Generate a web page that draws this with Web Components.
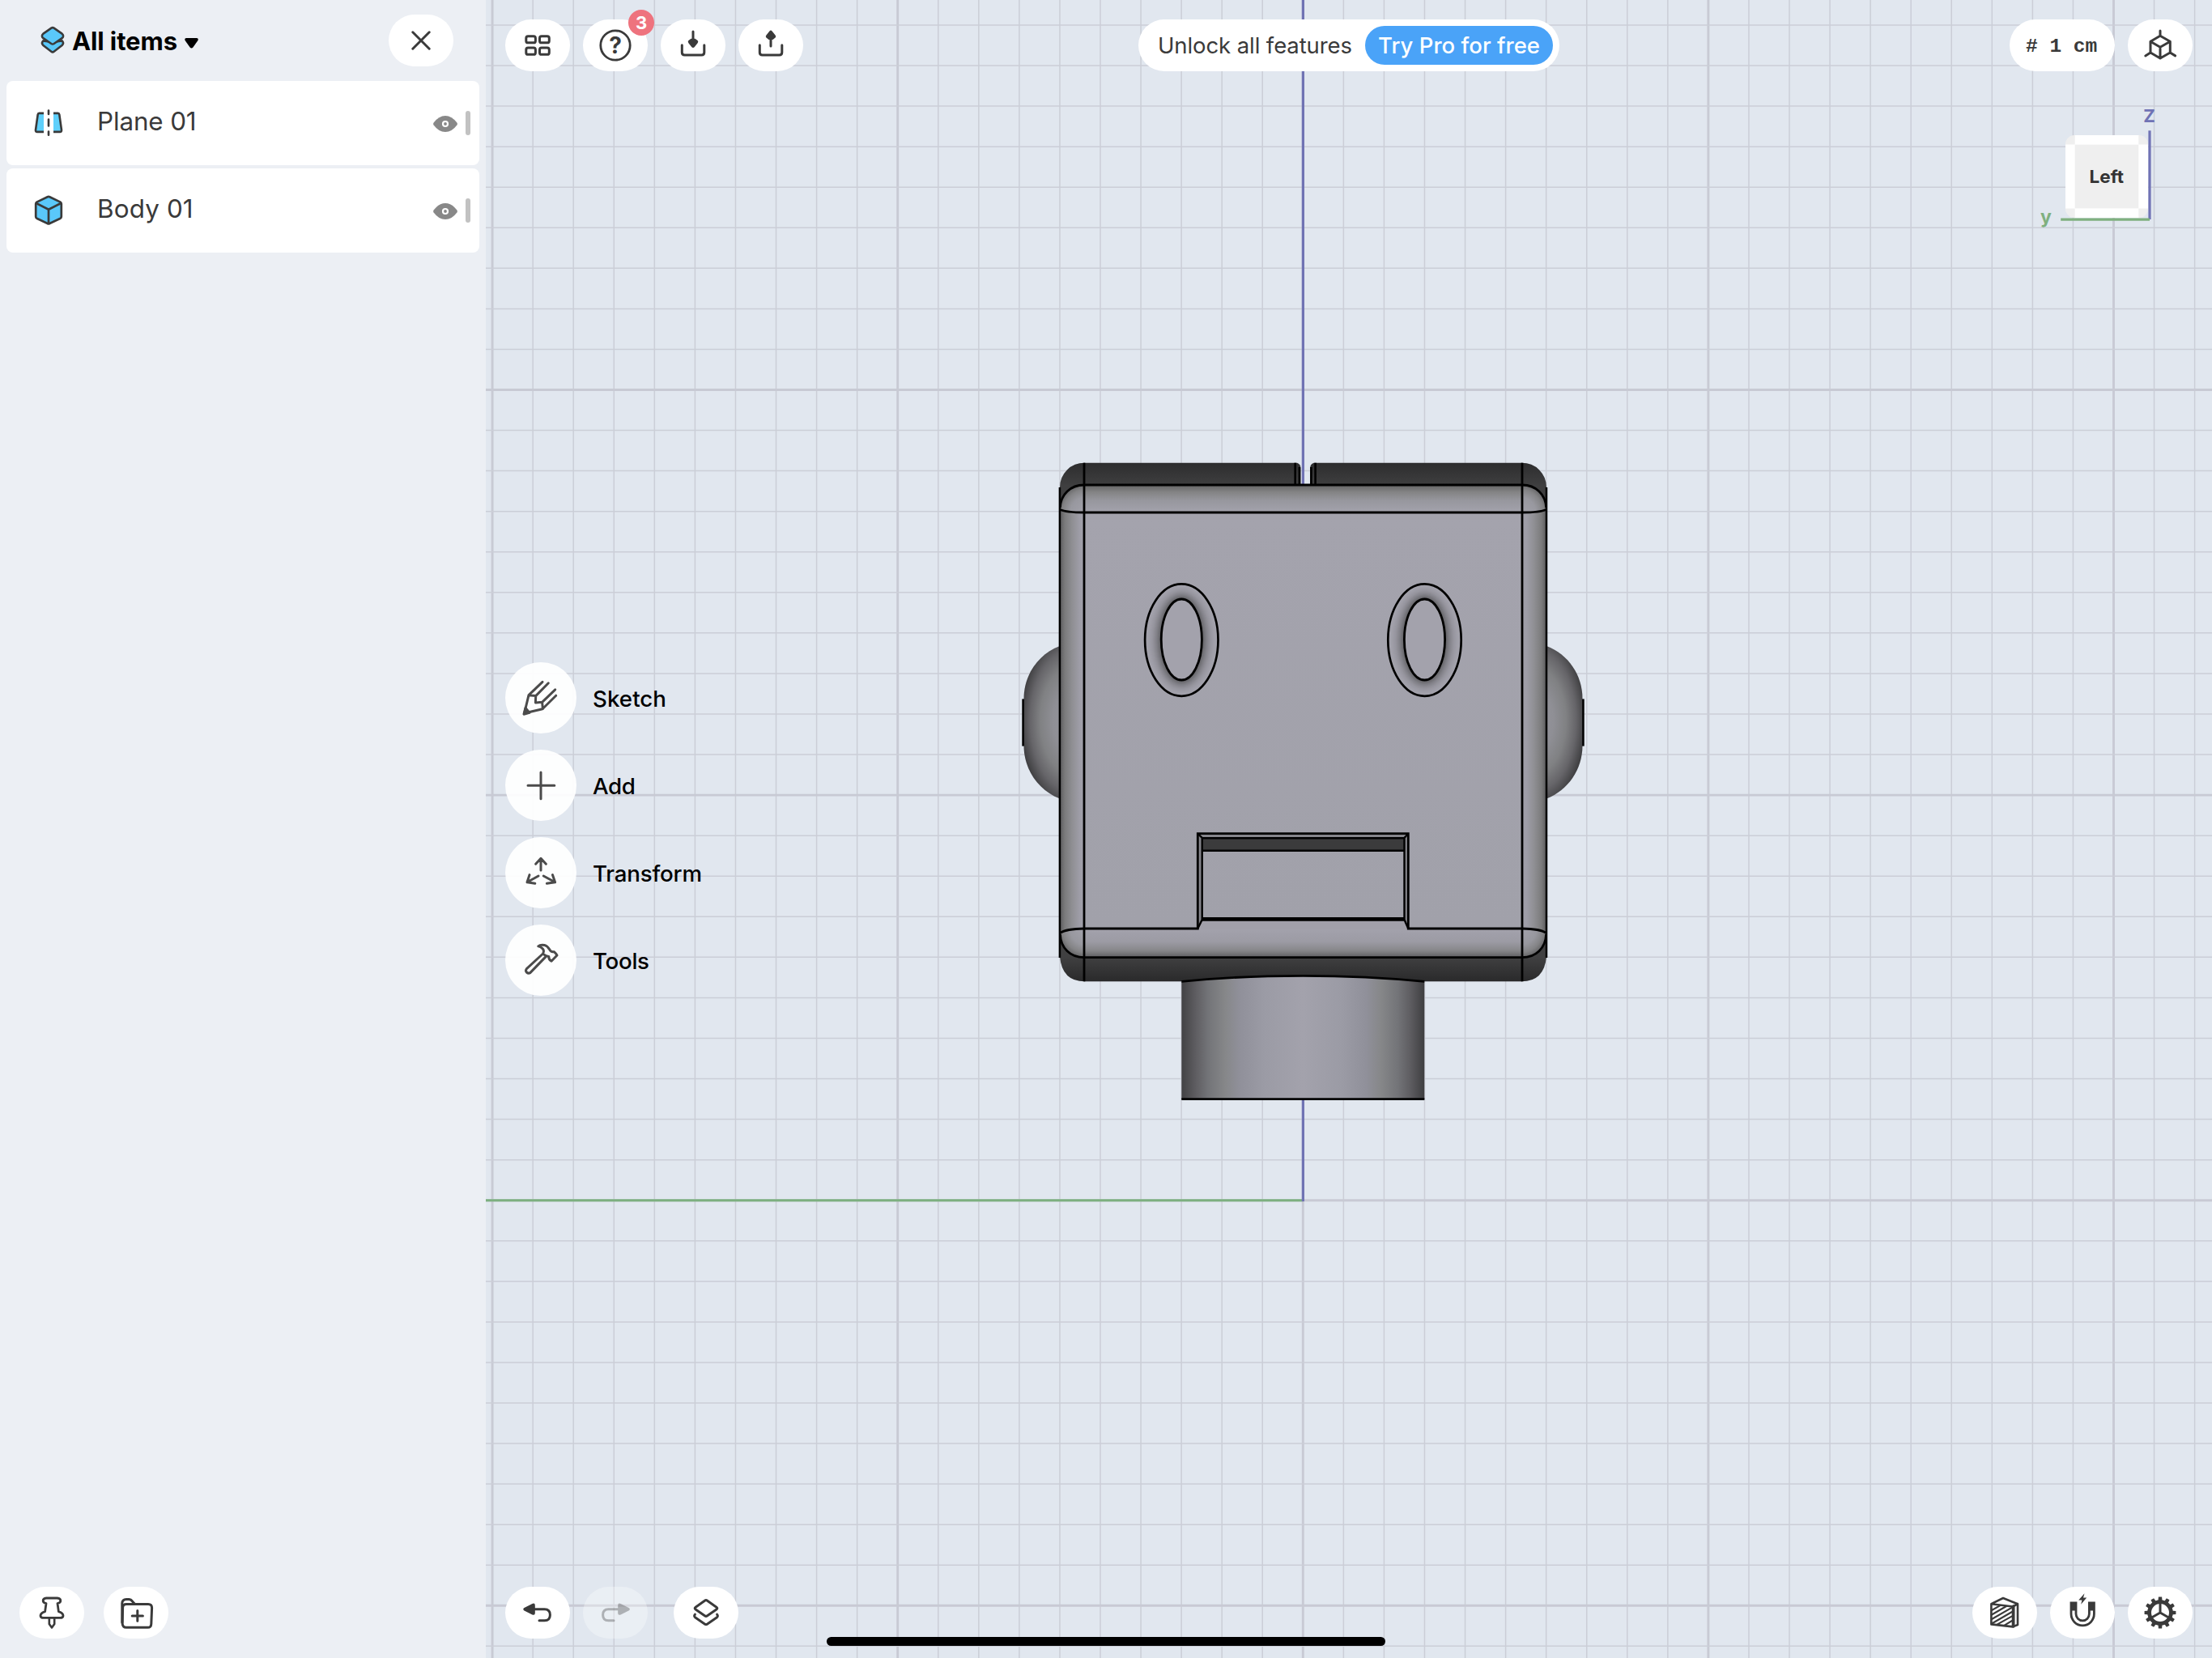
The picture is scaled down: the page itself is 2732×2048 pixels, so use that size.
<!DOCTYPE html>
<html lang="en">
<head>
<meta charset="utf-8">
<title>Modeling workspace</title>
<style>
  html, body { margin: 0; padding: 0; }
  body { width: 2732px; height: 2048px; overflow: hidden; background: #e1e7ef; font-family: Inter, "Liberation Sans", sans-serif; color: #3a3a3a; }
</style>
</head>
<body>
<model-app></model-app>
<script>
const define = (name, html, setup) => {
  const tpl = document.createElement('template');
  tpl.innerHTML = html;
  customElements.define(name, class extends HTMLElement {
    constructor() {
      super();
      this.attachShadow({ mode: 'open' }).appendChild(tpl.content.cloneNode(true));
    }
    connectedCallback() { if (setup) setup(this, this.shadowRoot); }
  });
};

/* Glyphs on an 80x64 button face */
const D = '#3a3a3a';
const gear = () => {
  let t = '';
  for (let i = 0; i < 12; i++) t += `<path d="M37.4 18.5 L37.9 12.6 H42.1 L42.6 18.5Z" fill="${D}" stroke="none" transform="rotate(${i * 30} 40 32)"/>`;
  return `${t}<circle cx="40" cy="32" r="13.4" stroke-width="4.8"/><path d="M40 19V32L28.7 38.5M40 32L51.3 38.5" stroke-width="3"/>`;
};
const undo = `<path d="M23 26.2 L33.4 20.9 Q36.8 19.6 36.8 23 V32.6 Q36.8 35.8 33.4 34.4 L23 29.2 Q21.4 27.7 23 26.2Z" fill="${D}" stroke="none"/><path d="M35 27.7H48.5Q55.4 27.7 55.4 34.7Q55.4 41.7 48.5 41.7H42"/>`;
const ICONS = {
  close: `<path d="M29.8 21.8L50.2 42.2M50.2 21.8L29.8 42.2"/>`,
  grid: `<rect x="25.8" y="20.8" width="11.6" height="8" rx="2.4"/><rect x="42.5" y="20.8" width="11.8" height="8" rx="2.4"/><rect x="25.8" y="34.9" width="11.6" height="8.4" rx="2.4"/><rect x="42.5" y="34.9" width="11.8" height="8.4" rx="2.4"/>`,
  help: `<circle cx="40" cy="32" r="18.2" stroke-width="2.8"/><text x="40" y="42.3" text-anchor="middle" font-size="28" font-weight="700" fill="${D}" stroke="none">?</text>`,
  download: `<path d="M40 15V28"/><path d="M37.5 23.8 H42.5 L45.6 26 Q47 27.6 45.6 29.2 L41.6 34.2 Q40 35.8 38.4 34.2 L34.4 29.2 Q33 27.6 34.4 26Z" fill="${D}" stroke="none"/><path d="M26.3 31.8V40.8Q26.3 44 29.5 44H50.6Q53.8 44 53.8 40.8V31.8"/>`,
  upload: `<path d="M40 33V20"/><path d="M37.5 25 H42.5 L45.6 22.6 Q47 21 45.6 19.4 L41.6 14.4 Q40 12.8 38.4 14.4 L34.4 19.4 Q33 21 34.4 22.6Z" fill="${D}" stroke="none"/><path d="M26.3 31.8V40.8Q26.3 44 29.5 44H50.6Q53.8 44 53.8 40.8V31.8"/>`,
  axes: `<path d="M40 14V20.3M40 20.3L52.3 27.2V41L40 48L28 41V27.2ZM28 27.2L40 34.3L52.3 27.2M40 34.3V48M28 41L21.8 44.9M52.3 41L58.6 44.9"/>`,
  pin: `<path d="M33.2 14H46.8Q50.8 14.4 50.8 17.3Q50.8 19.8 47 20.6L48.4 30.6Q54 32.6 54 35.8Q53.8 38.4 50 38.4H30Q26.2 38.4 26 35.8Q26 32.6 31.6 30.6L33 20.6Q29.2 19.8 29.2 17.3Q29.2 14.4 33.2 14Z" stroke-width="2.8"/><path d="M36.8 39V46L40 50.4L43.2 46V39" stroke-width="2.6"/>`,
  folder: `<path d="M22.8 44V20.5Q23 15.6 28 15.4H31.4Q33.8 15.6 35 17.4L38.6 21.4"/><path d="M28.2 21.5H55Q59.6 21.5 59.6 26L58.8 46Q58.6 50.3 54.6 50.3H27.8Q23.6 50.3 23.2 45.6L23.6 26Q23.6 21.5 28.2 21.5Z"/><path d="M41.8 29.5V42.3M35.2 35.9H48.4"/>`,
  undo,
  redo: `<g transform="matrix(-1 0 0 1 80 0)" opacity=".34">${undo}</g>`,
  layers: `<path d="M38.7 17.1Q40 16.2 41.3 17.1L53.2 25.5Q54.4 26.6 53.2 27.7L41.3 35.9Q40 36.8 38.7 35.9L26.8 27.7Q25.6 26.6 26.8 25.5Z"/><path d="M26.4 34.2Q24.6 36.2 26.8 38L38.7 46.2Q40 47 41.3 46.2L53.2 38Q55.4 36.2 53.6 34.2"/>`,
  section: `<path d="M23.4 21.2L38 14L56 21.2V47L50 49.4L23.4 46.4ZM23.4 21.2L50 24.5V49.4M50 24.5L56 21.2" stroke-width="2.6"/><path d="M50.8 24V49" stroke-width="3.4"/><path d="M24 29L34 23.4M24 34.5L42 24M24 40L49 25.6M24 45.5L49 31M31 46.4L49 36.3M40 47.3L49 42" stroke-width="2.1"/>`,
  magnet: `<path d="M29 18.4V33.6a11.2 11.2 0 0 0 22.4 0V18.4" stroke-width="8.8" stroke-linecap="butt"/><path d="M29 29.5V33.6a11.2 11.2 0 0 0 22.4 0V29.5" stroke-width="3.2" stroke="#fff" stroke-linecap="butt"/><path d="M42.5 8.3L35.2 16.4H39.4L38.2 21.8L45.2 13.4H41Z" fill="${D}" stroke="none"/>`,
  gear: gear()
};

/* Glyphs on an 88x88 round tool face */
const TOOLS = {
  sketch: `<path d="M46 24.3L29 40.6L23.6 63L46 57.8L62.7 41.2M29 40.8L37.7 41.6L53.3 25.8M37.7 41.6L37.4 49.9L45.6 49.3L61.7 33.8M45.6 49.3L46.4 57.6"/><path d="M23 64.2L25 56.4L30 62.4Z" fill="#4b4b4b"/>`,
  add: `<path d="M28 44.3H60.8M44 28V60.8"/>`,
  transform: `<path d="M44 41V26.4M37.6 33.2L44 26.4L50.4 33.2M41 48L27 55.8M30 46.6L27 55.8L36.8 57.2M47.3 48L61.6 55.8M58.4 46.6L61.6 55.8L51.4 57.2"/>`,
  tools: `<path d="M46.6 36L26.4 54.6Q24.6 57 26.4 59Q28.6 60.9 30.8 59.6L50.2 39.6M46.6 36Q48.6 32 46 29.6Q43.8 27.4 40.8 26.8Q43.2 24.6 48.4 25.4Q52 26.4 54.6 30.6Q56.6 34.4 60 33.6Q61.6 34.2 64 38L57 45.2Q53.6 43.6 53.8 39.4Q50.6 39.6 46.6 36Z"/>`
};

/* Text set to an exact advance width by distributing letter spacing */
define('fit-text', `<style>:host{display:block;white-space:nowrap;line-height:1}span{display:inline-block}</style><span><slot></slot></span>`, (el, root) => {
  const target = +el.getAttribute('w'), span = root.querySelector('span');
  const n = el.textContent.length;
  const w = span.getBoundingClientRect().width;
  span.style.letterSpacing = ((target - w) / (n - 1)).toFixed(3) + 'px';
  el.style.width = target + 'px';
});

define('icon-button', `<style>
  :host{display:grid;width:80px;height:64px;border-radius:32px;background:#fff;flex:none}
  :host([disabled]){background:rgba(255,255,255,.32)}
  svg{grid-area:1/1;width:80px;height:64px;fill:none;stroke:#3a3a3a;stroke-width:3;stroke-linecap:round;stroke-linejoin:round}
  ::slotted(*){grid-area:1/1}
</style><svg viewBox="0 0 80 64"></svg><slot></slot>`, (el, root) => {
  root.querySelector('svg').innerHTML = ICONS[el.getAttribute('icon')];
});

define('count-badge', `<style>:host{position:relative;left:56px;top:-12px;width:32px;height:32px;border-radius:50%;background:#ee737e;color:#fff;font:700 22px/32px Inter,sans-serif;text-align:center;display:block}</style><slot></slot>`);

define('tool-button', `<style>
  :host{display:flex;align-items:center;gap:20px;color:#000;font-size:27.7px;font-weight:450}
  svg{width:88px;height:88px;border-radius:50%;background:rgba(255,255,255,.93);fill:none;stroke:#4b4b4b;stroke-width:3;stroke-linecap:round;stroke-linejoin:round}
  ::slotted(*){padding-top:3px}
</style><svg viewBox="0 0 88 88"></svg><slot></slot>`, (el, root) => {
  root.querySelector('svg').innerHTML = TOOLS[el.getAttribute('icon')];
});

define('item-row', `<style>
  :host{display:flex;align-items:center;height:104px;border-radius:8px;background:#fff;box-sizing:border-box;padding:0 11px 0 32px;font-size:31.4px;color:#3a3a3a}
  .label{flex:1;padding:0 0 3px 40px}
  .eye{width:30px;height:20px;margin:2px 10px 0 0}
  .grip{width:6px;height:30px;border-radius:3px;background:#c2c2c2}
</style><slot name="icon"></slot><div class="label"><slot></slot></div>
<svg class="eye" viewBox="0 0 30 20"><path d="M0.6 8.6Q7 0 15 0T29.4 8.6Q30.3 10 29.4 11.4Q23 20 15 20T.6 11.4Q-.3 10 .6 8.6Z" fill="#888"/><circle cx="15" cy="10" r="3" fill="none" stroke="#fff" stroke-width="2.2"/></svg><div class="grip"></div>`);

define('side-panel', `<style>
  :host{display:flex;flex-direction:column;width:600px;height:2048px;background:#eceff4;box-sizing:border-box}
  header{display:flex;align-items:center;height:64px;padding:18px 40px 18px 50px}
  svg{display:block;flex:none}
  .title{display:flex;align-items:center;flex:1;color:#000;font-weight:750;font-size:31px}
  .title fit-text{margin:0 9px 0 9px}
  .list{display:flex;flex-direction:column;gap:4px;padding:0 8px;flex:1}
  svg.i{width:40px;height:40px}
  footer{display:flex;gap:24px;padding:0 24px 24px}
</style>
<header>
  <div class="title">
    <svg width="30" height="36" viewBox="50 32 30 36" fill="#5ac8fa" stroke="#3a3a3a" stroke-width="2.6" stroke-linejoin="round"><path d="M53.3 50.4Q50.6 53.4 53.4 56L63.4 63.8Q65 65 66.6 63.8L76.6 56Q79.4 53.4 76.7 50.4L65 52Z"/><path d="M63.4 34.6Q65 33.6 66.6 34.6L76.6 41.6Q79.6 44.4 76.6 47.2L66.6 54Q65 55 63.4 54L53.4 47.2Q50.4 44.4 53.4 41.6Z"/></svg>
    <fit-text w="130">All items</fit-text>
    <svg width="17" height="13" viewBox="0 0 17 13" style="margin-top:6px"><path d="M2 0H15Q17.6.6 16.4 3L10.4 11.4Q8.5 13.6 6.6 11.4L.6 3Q-.6.6 2 0Z"/></svg>
  </div>
  <icon-button icon="close"></icon-button>
</header>
<div class="list">
  <item-row><svg class="i" slot="icon" viewBox="40 131.5 40 40" fill="#5fd0fb" stroke="#3a3a3a" stroke-width="2.6" stroke-linecap="butt" stroke-linejoin="round"><path d="M54 139.4H48.3Q47 139.4 46.7 141L44 160Q43.8 162.4 46 162.4H54"/><path d="M66 139.4H71.7Q73 139.4 73.3 141L76 160Q76.2 162.4 74 162.4H66"/><path d="M60 136V140.4M60 147V155M60 162V166.2" stroke-linecap="round"/></svg><fit-text w="122.6">Plane 01</fit-text></item-row>
  <item-row><svg class="i" slot="icon" viewBox="40 240 40 40" fill="#5ac8fa" stroke="#3a3a3a" stroke-width="2.7" stroke-linejoin="round"><path d="M58.6 243.2Q60 242.5 61.4 243.2L74.6 249.6Q75.8 250.3 75.8 251.8V267.6Q75.8 269 74.6 269.7L61.4 276Q60 276.8 58.6 276L45.4 269.7Q44.2 269 44.2 267.6V251.8Q44.2 250.3 45.4 249.6Z"/><path d="M44.8 251L60 258.8L75.2 251M60 258.8V276"/></svg><fit-text w="118.6">Body 01</fit-text></item-row>
</div>
<footer><icon-button icon="pin"></icon-button><icon-button icon="folder"></icon-button></footer>`);

define('pro-banner', `<style>
  :host{display:flex;align-items:center;height:64px;width:520px;box-sizing:border-box;border-radius:32px;background:#fff;padding:0 8px 0 24px;justify-content:space-between;font-size:27.5px;color:#3a3a3a}
  fit-text{padding-top:2px}
  .cta{display:flex;align-items:center;justify-content:center;width:232px;height:48px;border-radius:24px;background:#4aa3f8;color:#fff;font-weight:450}
</style><fit-text w="240">Unlock all features</fit-text><div class="cta"><fit-text w="200">Try Pro for free</fit-text></div>`);

define('unit-pill', `<style>:host{display:block;box-sizing:border-box;width:130px;height:64px;padding-left:20px;border-radius:32px;background:#fff;font:700 24.5px/67px "Liberation Mono",monospace;white-space:pre}</style><slot></slot>`);

define('nav-cube', `<style>:host{display:block;width:150px;height:170px}svg{display:block;overflow:visible;font-family:Inter,sans-serif;font-weight:700}</style>
<svg width="150" height="170" viewBox="2512 130 150 170">
  <rect x="2551" y="167" width="102" height="102" rx="11" fill="#efefef"/>
  <path d="M2562.7 167H2641.3V269H2562.7ZM2551 178.6H2653V257.4H2551Z" fill="#fff"/>
  <rect x="2562.7" y="178.6" width="78.6" height="78.8" fill="#efefef"/>
  <path d="M2655 161.3V271" stroke="#7073b5" stroke-width="3.2"/>
  <path d="M2545.2 271.2H2655" stroke="#7fb07f" stroke-width="3.2"/>
  <text x="2601.8" y="225.8" font-size="22" text-anchor="middle" fill="#333" textLength="42.5" lengthAdjust="spacingAndGlyphs">Left</text>
  <text x="2654.6" y="151" font-size="22" text-anchor="middle" fill="#7073b5">Z</text>
  <text x="2527" y="275.5" font-size="23" text-anchor="middle" fill="#7fb07f">y</text>
</svg>`);

define('scene-view', `<style>:host{display:block}svg{display:block}</style>
<svg width="2132" height="2048" viewBox="600 0 2132 2048">
  <defs>
    <linearGradient id="top" x2="0" y2="1"><stop stop-color="#2d2d2e"/><stop offset="1" stop-color="#3f3f40"/></linearGradient>
    <linearGradient id="corner" gradientUnits="userSpaceOnUse" x1="0" x2="0" y1="572" y2="600"><stop stop-color="#2d2d2e"/><stop offset="1" stop-color="#3f3f40"/></linearGradient>
    <linearGradient id="bot" gradientUnits="userSpaceOnUse" x1="0" x2="0" y1="1182" y2="1212"><stop stop-color="#404041"/><stop offset="1" stop-color="#2a2a2b"/></linearGradient>
    <linearGradient id="bt" x2="0" y2="1"><stop stop-color="#646465"/><stop offset=".25" stop-color="#838384"/><stop offset=".55" stop-color="#97979e"/><stop offset="1" stop-color="#a4a3ad"/></linearGradient>
    <linearGradient id="bb" x2="0" y2="1"><stop stop-color="#a3a2ac"/><stop offset=".45" stop-color="#9c9ba4"/><stop offset=".75" stop-color="#87878a"/><stop offset="1" stop-color="#5d5d5f"/></linearGradient>
    <linearGradient id="bl"><stop stop-color="#5a5a5c"/><stop offset=".2" stop-color="#7b7b7c"/><stop offset=".5" stop-color="#8f8f93"/><stop offset=".8" stop-color="#9e9da7"/><stop offset="1" stop-color="#a1a0aa"/></linearGradient>
    <linearGradient id="neck"><stop stop-color="#424244"/><stop offset=".06" stop-color="#5f5e62"/><stop offset=".11" stop-color="#737478"/><stop offset=".18" stop-color="#868789"/><stop offset=".24" stop-color="#90909a"/><stop offset=".34" stop-color="#9b9ba5"/><stop offset=".5" stop-color="#a3a2ac"/><stop offset=".66" stop-color="#9b9ba5"/><stop offset=".76" stop-color="#90909a"/><stop offset=".82" stop-color="#868789"/><stop offset=".89" stop-color="#737478"/><stop offset=".94" stop-color="#5f5e62"/><stop offset="1" stop-color="#3e3e40"/></linearGradient>
    <radialGradient id="ear" gradientUnits="userSpaceOnUse" cx="0" cy="0" r="1" gradientTransform="translate(1322 890) scale(62 108)"><stop stop-color="#96969e"/><stop offset=".35" stop-color="#8f8f95"/><stop offset=".6" stop-color="#808183"/><stop offset=".8" stop-color="#666569"/><stop offset="1" stop-color="#3d3d3f"/></radialGradient>
    <radialGradient id="cor" gradientUnits="userSpaceOnUse" cx="0" cy="0" r="1" gradientTransform="translate(1341 635) scale(36 38)"><stop stop-color="#a4a3ad"/><stop offset=".55" stop-color="#98989f"/><stop offset=".8" stop-color="#838385"/><stop offset="1" stop-color="#5f5f61"/></radialGradient>
    <linearGradient id="soft" x2="0" y2="1"><stop stop-color="#a4a3ad"/><stop offset="1" stop-color="#a1a1aa"/></linearGradient>
  </defs>
  <rect x="600" width="2132" height="2048" fill="#e1e7ef"/>
  <g id="grid"></g>
  <path d="M600 1482.8H1609.3" stroke="#7db080" stroke-width="3"/>
  <path d="M1609.4 0V1484" stroke="#7073b3" stroke-width="3.2"/>
  <g id="side">
    <path d="M1309 798C1282 808 1264.5 834 1264.5 863V921C1264.5 950 1282 976 1309 986.6Z" fill="url(#ear)"/>
    <path d="M1263.6 863.4V921.6" stroke="#000" stroke-width="2.6"/>
    <path d="M1309 640V602A30 30 0 0 1 1339.5 571.7V640Z" fill="url(#corner)"/>
    <path d="M1309 1150V1182Q1312 1212.3 1339.5 1212.3V1150Z" fill="url(#bot)"/>
    <rect x="1309" y="630" width="30.5" height="520" fill="url(#bl)"/>
    <path d="M1339 599C1322 599 1310 610 1309.8 629.5L1339 633Z" fill="url(#cor)"/>
    <g transform="matrix(1 0 0 -1 0 1781.2)"><path d="M1339 599C1322 599 1310 610 1309.8 629.5L1339 635Z" fill="url(#cor)"/></g>
  </g>
  <g id="mirror"></g>
  <path d="M1339 571.7H1602Q1606.4 573 1606.4 578V600H1339Z" fill="url(#top)"/>
  <path d="M1618.2 600V578Q1618.2 573 1622.6 571.7H1880V600Z" fill="url(#top)"/>
  <rect x="1339" y="1182" width="541" height="30.3" fill="url(#bot)"/>
  <rect x="1339" y="599" width="541" height="35" fill="url(#bt)"/>
  <rect x="1339" y="633" width="541" height="515" fill="url(#soft)"/>
  <rect x="1339" y="1147" width="541" height="36" fill="url(#bb)"/>
  <path d="M1484 1137H1735L1739.3 1148H1479.3Z" fill="#a1a0a9"/>
  <path d="M1459.3 1212.5Q1530 1205.3 1609.3 1205.3T1759.3 1212.5V1358H1459.3Z" fill="url(#neck)"/>
  <path d="M1479.3 1029.7H1739.3L1734.7 1035H1484.7ZM1479.3 1029.7L1484.7 1035V1136L1479.3 1147ZM1739.3 1029.7L1734.7 1035V1136L1739.3 1147Z" fill="#85858b"/>
  <rect x="1484.7" y="1035" width="250" height="15.8" fill="#3b3b3c"/>
  <g fill="none" stroke="#000" stroke-width="2.8">
    <path d="M1339 599H1880M1339 633H1880M1339 571.7V1212.3M1880 571.7V1212.3M1339 1182.7H1880M1339 1147H1479.3V1029.7H1739.3V1147H1880"/>
    <path d="M1479.3 1029.7L1484.7 1035V1136L1479.3 1147M1739.3 1029.7L1734.5 1035V1136L1739.3 1147M1484.7 1035.2H1734.7M1484.7 1050.8H1734.7" stroke-width="2.4"/>
    <path d="M1484 1135.4H1735" stroke-width="4.8"/>
    <path d="M1308.9 602V1183M1910 602V1183" stroke-width="2.5"/>
    <path d="M1339 599C1322 599 1310 611 1309.4 627M1309.4 629.5C1316 632.6 1326 633 1339 633M1339 1182.7C1322 1182.7 1310 1171 1309.4 1154M1309.4 1152.4C1316 1148 1326 1147.2 1339 1147"/>
    <path d="M1880 599C1897 599 1909 611 1909.6 627M1909.6 629.5C1903 632.6 1893 633 1880 633M1880 1182.7C1897 1182.7 1909 1171 1909.6 1154M1909.6 1152.4C1903 1148 1893 1147.2 1880 1147"/>
    <path d="M1599.7 571.7V598M1604.9 577V598M1619.4 577V598M1624.6 571.7V598" stroke-width="2.6"/>
    <path d="M1459.3 1212.4Q1530 1205.3 1609.3 1205.3T1759.3 1212.4M1459.3 1357.7H1759.3"/>
  </g>
  <g id="eyes"></g>
</svg>`, (el, root) => {
  const p = 50.06, ox = 1609.3, oy = 1482.7;
  let s = '';
  for (let i = -20; i <= 22; i++) {
    const x = (ox + i * p).toFixed(2);
    s += `<path d="M${x} 0V2048" stroke="${i % 10 ? '#cbced7' : '#c8cad4'}" stroke-width="${i % 10 ? 1.5 : 2.9}"/>`;
  }
  for (let i = -29; i <= 11; i++) {
    const y = (oy + i * p).toFixed(2);
    s += `<path d="M600 ${y}H2732" stroke="${i % 10 ? '#cbced7' : '#c8cad4'}" stroke-width="${i % 10 ? 1.5 : 2.9}"/>`;
  }
  root.getElementById('grid').innerHTML = s;
  root.getElementById('mirror').innerHTML = `<g transform="matrix(-1 0 0 1 3219 0)">${root.getElementById('side').innerHTML}</g>`;
  let e = '';
  for (const cx of [1459.3, 1759.5]) {
    const n = 22;
    for (let i = 0; i <= n; i++) {
      const t = i / n, k = Math.pow(t, 2.1);
      const c = [163, 162, 172].map((v, j) => Math.round(v + ([88, 88, 91][j] - v) * k));
      e += `<ellipse cx="${cx}" cy="${790.6 - .6 * t}" rx="${45.6 - 20.6 * t}" ry="${69.8 - 19.8 * t}" fill="rgb(${c})"/>`;
    }
    e += `<ellipse cx="${cx}" cy="790" rx="25.1" ry="50" fill="#a3a2ac" stroke="#000" stroke-width="2.8"/><ellipse cx="${cx}" cy="790.6" rx="45.2" ry="69.2" fill="none" stroke="#000" stroke-width="2.7"/>`;
  }
  root.getElementById('eyes').innerHTML = e;
});

define('model-app', `<style>
  :host{display:grid;grid-template:2048px/2732px;width:2732px;height:2048px;overflow:hidden}
  .body{grid-area:1/1;display:flex}
  .view{display:grid;grid-template:2048px/2132px}
  scene-view,.hud{grid-area:1/1}
  .hud{display:grid;grid-template-rows:64px 1fr 64px;box-sizing:border-box;padding:24px}
  .bar{display:grid;grid-template-columns:782px 1fr auto}
  .row{display:flex;gap:16px}
  .mid{display:flex;justify-content:space-between}
  .tools{display:flex;flex-direction:column;gap:20px;padding-top:730px}
  nav-cube{margin:42px 46px 0 0}
  .bottom{display:flex;justify-content:space-between}
  .home{grid-area:1/1;align-self:end;justify-self:center;width:690px;height:11px;border-radius:5.5px;background:#000;margin-bottom:15px;z-index:1}
</style>
<div class="body">
  <side-panel></side-panel>
  <div class="view">
    <scene-view></scene-view>
    <div class="hud">
      <div class="bar">
        <div class="row"><icon-button icon="grid"></icon-button><icon-button icon="help"><count-badge>3</count-badge></icon-button><icon-button icon="download"></icon-button><icon-button icon="upload"></icon-button></div>
        <pro-banner></pro-banner>
        <div class="row"><unit-pill># 1 cm</unit-pill><icon-button icon="axes"></icon-button></div>
      </div>
      <div class="mid">
        <div class="tools">
          <tool-button icon="sketch"><fit-text w="91">Sketch</fit-text></tool-button>
          <tool-button icon="add"><fit-text w="53">Add</fit-text></tool-button>
          <tool-button icon="transform"><fit-text w="135">Transform</fit-text></tool-button>
          <tool-button icon="tools"><fit-text w="70">Tools</fit-text></tool-button>
        </div>
        <nav-cube></nav-cube>
      </div>
      <div class="bottom">
        <div class="row"><icon-button icon="undo"></icon-button><icon-button icon="redo" disabled></icon-button><icon-button icon="layers" style="margin-left:16px"></icon-button></div>
        <div class="row"><icon-button icon="section"></icon-button><icon-button icon="magnet"></icon-button><icon-button icon="gear"></icon-button></div>
      </div>
    </div>
  </div>
</div>
<div class="home"></div>`);
</script>
</body>
</html>
